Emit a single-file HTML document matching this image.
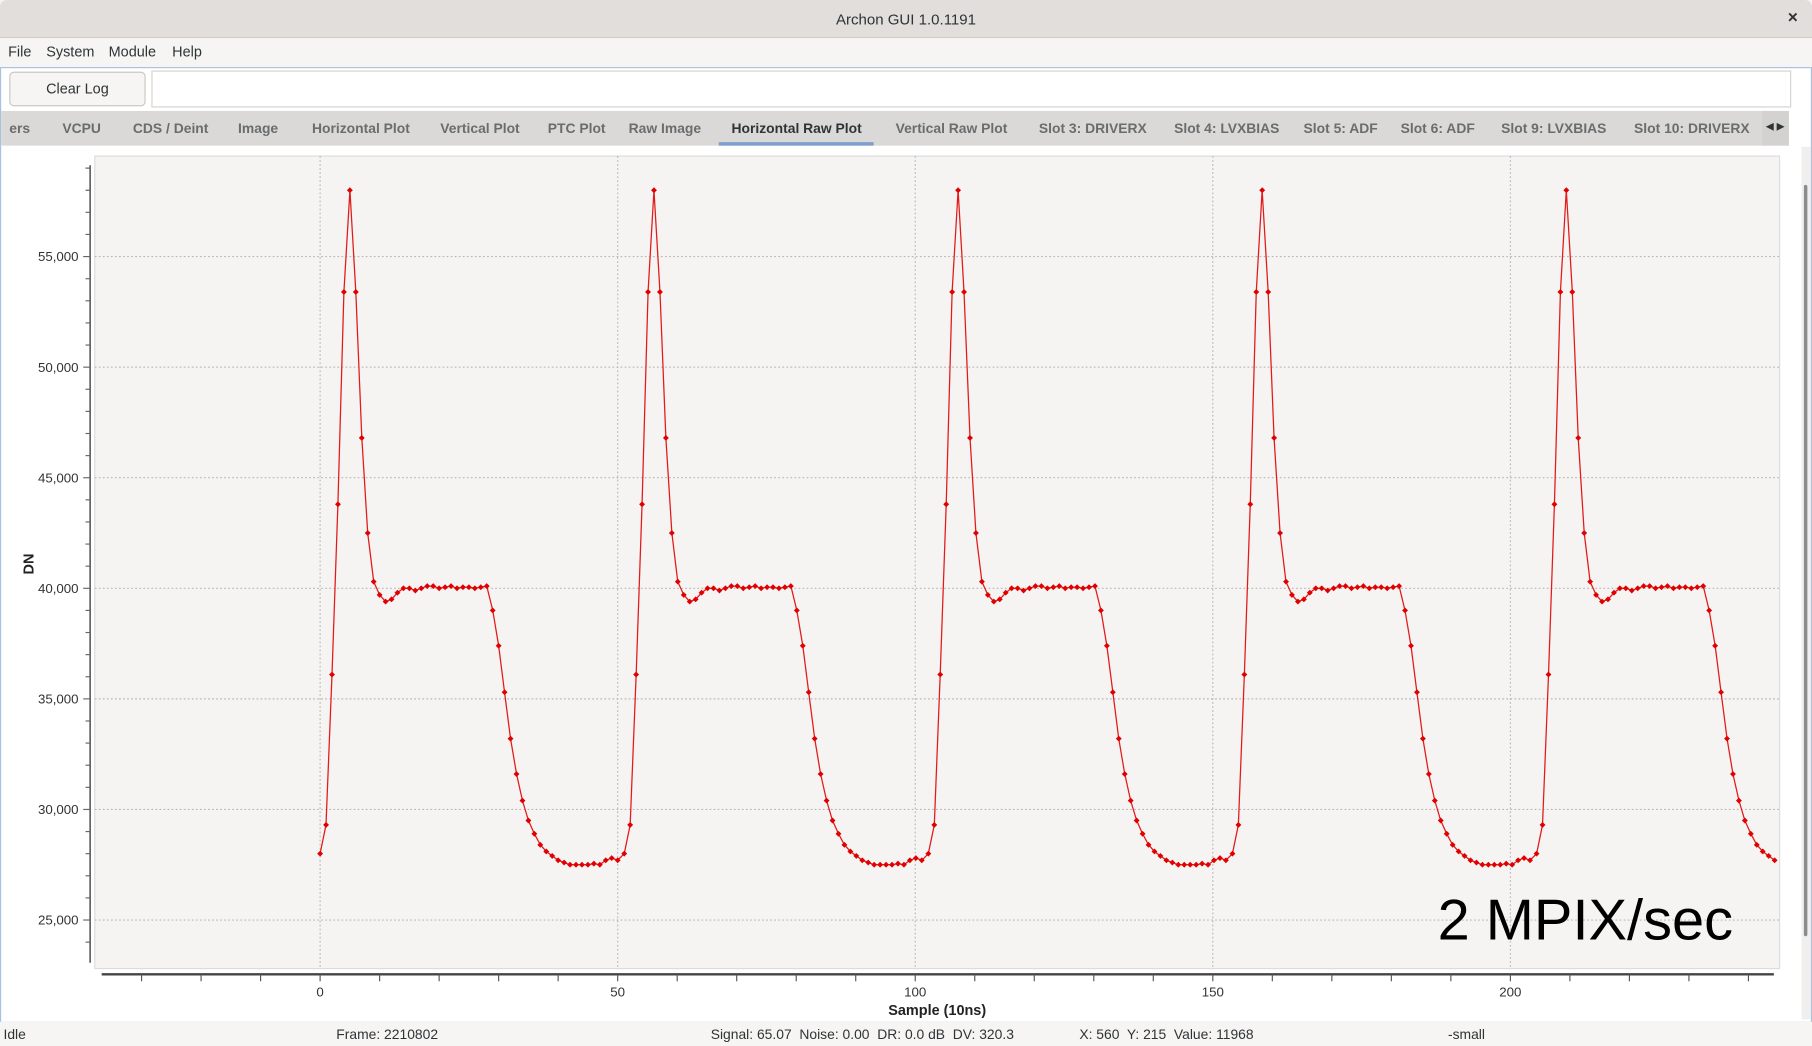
<!DOCTYPE html>
<html><head><meta charset="utf-8">
<style>
html,body{margin:0;padding:0;width:1812px;height:1046px;overflow:hidden;background:#fff;}
#root{position:absolute;left:0;top:0;width:1568px;height:905px;transform:scale(1.15561,1.15580);transform-origin:0 0;font-family:"Liberation Sans","DejaVu Sans",sans-serif;font-size:12px;color:#2e3436;background:#f6f5f4;}
.abs{position:absolute;}
#title{left:0;top:0;width:1568px;height:32px;background:#e1dedb;border-bottom:1px solid #cfcbc7;border-radius:6px 6px 0 0;}
#title .t{left:0;width:1568px;top:9px;text-align:center;font-size:13px;color:#2e3436;}
#menu{left:0;top:33px;width:1568px;height:25px;background:#f6f5f4;}
#menu span{position:absolute;top:5px;font-size:12.5px;}
#main{left:0;top:58px;width:1566px;height:825px;border:1px solid #a7c1df;background:#fff;}
.tab{position:absolute;top:104px;font-size:12px;color:#6a6d6e;font-weight:bold;}
</style></head><body><div id="root">
<div id="title" class="abs"><div class="t abs">Archon GUI 1.0.1191</div><div class="abs" style="left:1547px;top:7px;font-size:15px;font-weight:bold;">×</div></div>
<div id="menu" class="abs"><span style="left:7px">File</span><span style="left:40px">System</span><span style="left:94px">Module</span><span style="left:149px">Help</span></div>
<div id="main" class="abs"></div>
<div class="abs" style="left:8px;top:62px;width:116px;height:28px;border:1px solid #cdc7c2;border-radius:4px;background:#f6f5f4;"><div style="text-align:center;margin-top:7px;font-size:12.5px">Clear Log</div></div>
<div class="abs" style="left:131px;top:61px;width:1417px;height:30px;border:1px solid #d6d2ce;background:#fff"></div>
<div class="abs" style="left:1px;top:96px;width:1547px;height:30px;background:#dad9d8;"></div>
<div class="abs" style="left:1525px;top:96px;width:23px;height:30px;background:#d3d2d1;"></div>
<span class="tab" style="left:8px">ers</span>
<span class="tab" style="left:54px">VCPU</span>
<span class="tab" style="left:115px">CDS / Deint</span>
<span class="tab" style="left:206px">Image</span>
<span class="tab" style="left:270px">Horizontal Plot</span>
<span class="tab" style="left:381px">Vertical Plot</span>
<span class="tab" style="left:474px">PTC Plot</span>
<span class="tab" style="left:544px">Raw Image</span>
<span class="tab" style="left:633px;color:#2e3436">Horizontal Raw Plot</span>
<div class="abs" style="left:622px;top:123px;width:134px;height:3px;background:#7d9fcf"></div>
<span class="tab" style="left:775px">Vertical Raw Plot</span>
<span class="tab" style="left:899px">Slot 3: DRIVERX</span>
<span class="tab" style="left:1016px">Slot 4: LVXBIAS</span>
<span class="tab" style="left:1128px">Slot 5: ADF</span>
<span class="tab" style="left:1212px">Slot 6: ADF</span>
<span class="tab" style="left:1299px">Slot 9: LVXBIAS</span>
<span class="tab" style="left:1414px">Slot 10: DRIVERX</span>
<span class="abs" style="left:1528px;top:104px;font-size:9px;color:#2e3436">◀ ▶</span>
<div class="abs" style="left:1559px;top:127px;width:8px;height:755px;background:#f0efee"></div>
<div class="abs" style="left:1561px;top:160px;width:3px;height:650px;background:#8c8c8c;border-radius:2px"></div>
<svg class="abs" style="left:0;top:126px" width="1558" height="758" id="plot"></svg>
<div class="abs" style="left:1244px;top:767px;font-size:50px;color:#000;">2 MPIX/sec</div>
<div class="abs" style="left:0;top:884px;width:1568px;height:21px;background:#f6f5f4;font-size:12px">
<span class="abs" style="left:3px;top:4px">Idle</span>
<span class="abs" style="left:291px;top:4px">Frame: 2210802</span>
<span class="abs" style="left:615px;top:4px">Signal: 65.07&nbsp; Noise: 0.00&nbsp; DR: 0.0 dB&nbsp; DV: 320.3</span>
<span class="abs" style="left:934px;top:4px">X: 560&nbsp; Y: 215&nbsp; Value: 11968</span>
<span class="abs" style="left:1253px;top:4px">-small</span>
</div>
</div>
<script>
(function(){
var oy=126,s='';
function Y(v){return 222+(55000-v)*0.0191333-oy;}
function X(i){return 277+i*5.15;}
s+='<rect x="82" y="'+(135-oy)+'" width="1458" height="'+(838-135)+'" fill="#f5f4f3" stroke="#dcdcdc"/>';
[0,50,100,150,200].forEach(function(i){s+='<line x1="'+X(i)+'" y1="'+(135-oy)+'" x2="'+X(i)+'" y2="'+(838-oy)+'" stroke="#b8b8b8" stroke-dasharray="1.5,2"/>';});
[25000,30000,35000,40000,45000,50000,55000].forEach(function(v){s+='<line x1="82" y1="'+Y(v)+'" x2="1540" y2="'+Y(v)+'" stroke="#b8b8b8" stroke-dasharray="1.5,2"/>';
s+='<text x="68" y="'+(Y(v)+4)+'" font-size="11.5" text-anchor="end" fill="#333" font-family="Liberation Sans,sans-serif">'+(v/1000)+',000</text>';});
s+='<line x1="78" y1="'+(143-oy)+'" x2="78" y2="'+(833-oy)+'" stroke="#666" stroke-width="1.5"/>';
for(var v=23000;v<=59000;v+=1000){var y=Y(v);if(y<143-oy||y>833-oy)continue;s+='<line x1="'+(v%5000?74:72)+'" y1="'+y+'" x2="78" y2="'+y+'" stroke="#666"/>';}
s+='<text transform="translate(29,'+(488-oy)+') rotate(-90)" font-size="12.5" font-weight="bold" text-anchor="middle" fill="#222" font-family="Liberation Sans,sans-serif">DN</text>';
s+='<line x1="88" y1="'+(843-oy)+'" x2="1535" y2="'+(843-oy)+'" stroke="#444" stroke-width="2"/>';
for(var i=-30;i<=245;i+=10){var x=X(i);if(x<88||x>1535)continue;s+='<line x1="'+x+'" y1="'+(843-oy)+'" x2="'+x+'" y2="'+(849-oy)+'" stroke="#555"/>';}
[0,50,100,150,200].forEach(function(i){s+='<text x="'+X(i)+'" y="'+(862-oy)+'" font-size="11.5" text-anchor="middle" fill="#333" font-family="Liberation Sans,sans-serif">'+i+'</text>';});
s+='<text x="811" y="'+(878-oy)+'" font-size="12.5" font-weight="bold" text-anchor="middle" fill="#222" font-family="Liberation Sans,sans-serif">Sample (10ns)</text>';
var w=[28000,29300,36100,43800,53400,58000,53400,46800,42500,40300,39700,39400,39500,39800,40000,40000,39900,40000,40100,40100,40000,40050,40100,40000,40050,40050,40000,40050,40100,39000,37400,35300,33200,31600,30400,29500,28900,28400,28100,27900,27700,27600,27500,27500,27500,27500,27550,27500,27700,27800,27700,28000];
var pts=[];
for(var p=0;p<5;p++){for(var k=0;k<51;k++){var sm=p*51.1+k;if(sm>245)break;pts.push([X(sm),Y(w[k])]);}}
var d='M'+pts.map(function(q){return q[0].toFixed(1)+','+q[1].toFixed(1);}).join(' L');
s+='<path d="'+d+'" fill="none" stroke="#e21a1a" stroke-width="1.1"/>';
pts.forEach(function(q){s+='<rect x="'+(q[0]-1.8)+'" y="'+(q[1]-1.8)+'" width="3.6" height="3.6" fill="#e00000" transform="rotate(45 '+q[0]+' '+q[1]+')"/>';});
document.getElementById('plot').innerHTML=s;
})();
</script>
</body></html>
